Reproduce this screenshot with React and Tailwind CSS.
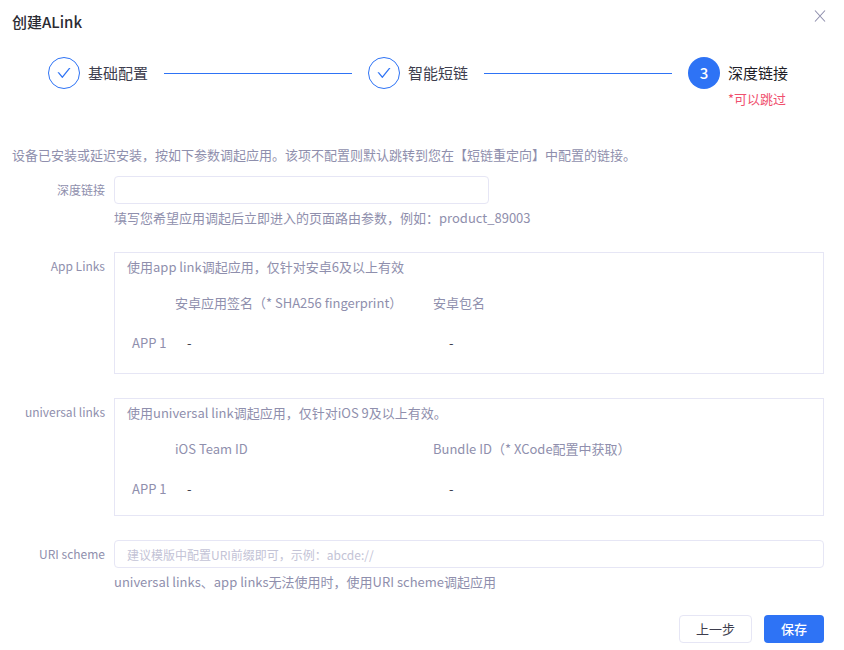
import React, { useState } from 'react';

const steps = [
    { title: '基础配置', status: 'done' },
    { title: '智能短链', status: 'done' },
    { title: '深度链接', status: 'active', subTitle: '*可以跳过' },
];

const StepIcon = ({ status, number }) => {
    if (status === 'done') {
        return (
            <span className="flex h-8 w-8 shrink-0 items-center justify-center rounded-full border border-[#2e73f5] text-[#2e73f5]">
                <svg width="16" height="16" viewBox="0 0 1024 1024" fill="currentColor" aria-hidden="true">
                    <path d="M912 190h-69.9c-9.8 0-19.1 4.5-25.1 12.2L404.7 724.5 207 474a32 32 0 0 0-25.1-12.2H112c-6.7 0-10.4 7.7-6.3 12.9l273.9 347c12.8 16.2 37.4 16.2 50.3 0l488.4-618.9c4.1-5.1.4-12.8-6.3-12.8z" />
                </svg>
            </span>
        );
    }
    return (
        <span className="flex h-8 w-8 shrink-0 items-center justify-center rounded-full bg-[#2e73f5] text-[15px] font-medium text-white">
            {number}
        </span>
    );
};

const Steps = () => (
    <ol className="flex items-start px-9">
        {steps.map((step, index) => {
            const last = index === steps.length - 1;
            return (
                <li key={step.title} className={last ? 'flex' : 'flex flex-1'}>
                    <StepIcon status={step.status} number={index + 1} />
                    <div className="ml-2 shrink-0">
                        <div className={last ? 'text-[15px] leading-8 text-[#1d1d26]' : 'text-[15px] leading-8 text-[#3d3d4d]'}>
                            {step.title}
                        </div>
                        {step.subTitle && <div className="text-[13px] leading-5 text-[#f0506e]">{step.subTitle}</div>}
                    </div>
                    {!last && <span className="mx-4 mt-4 h-px flex-1 bg-[#2e73f5]" />}
                </li>
            );
        })}
    </ol>
);

const labelClass = 'w-[102px] shrink-0 pr-[9px] text-right text-xs leading-7';

const FormRow = ({ label, htmlFor, children }) => (
    <div className="flex">
        {htmlFor ? (
            <label htmlFor={htmlFor} className={labelClass}>{label}</label>
        ) : (
            <div className={labelClass}>{label}</div>
        )}
        <div className="min-w-0 flex-1">{children}</div>
    </div>
);

const AppTable = ({ intro, columns, className }) => (
    <div className={`border border-[#e6e6f5] px-3 pt-1 ${className}`}>
        <p className="mb-1.5 leading-5">{intro}</p>
        <table className="w-full table-fixed text-left">
            <thead>
                <tr className="h-10">
                    <td className="w-12" />
                    <th className="w-[258px] font-normal">{columns[0]}</th>
                    <th className="font-normal">{columns[1]}</th>
                </tr>
            </thead>
            <tbody>
                <tr className="h-10">
                    <th className="whitespace-nowrap pl-[5px] font-normal">APP 1</th>
                    <td className="pl-3 text-[#3d3d4d]">-</td>
                    <td className="pl-4 text-[#3d3d4d]">-</td>
                </tr>
            </tbody>
        </table>
    </div>
);

const inputClass = 'block h-7 rounded border border-[#e6e6f5] bg-white px-3 text-xs text-[#3d3d4d] placeholder:text-[#c3c3d6] focus:border-[#2e73f5] focus:outline-none';

const App = () => {
    const [formData, setFormData] = useState({ deepLink: '', uriScheme: '' });
    const { deepLink, uriScheme } = formData;

    const onChange = (e) => {
        setFormData({ ...formData, [e.target.name]: e.target.value });
    };

    const onSubmit = (e) => {
        e.preventDefault();
    };

    return (
        <div className="bg-white pb-1 pl-3 pr-5 font-['Noto_Sans_CJK_SC',sans-serif] text-[13px] text-[#8f8fad]">
            {/* Header */}
            <header className="mb-3.5 flex items-start justify-between">
                <h1 className="text-[15px] font-medium leading-[43px] text-[#2b2b33]">创建ALink</h1>
                <button type="button" aria-label="关闭" className="-mr-3 flex h-8 w-8 items-center justify-center">
                    <svg width="12" height="12" viewBox="0 0 12 12" fill="none" stroke="currentColor" strokeWidth="1.1" aria-hidden="true">
                        <path d="M1 0.5 11 11.5M11 0.5 1 11.5" />
                    </svg>
                </button>
            </header>

            <Steps />

            <form onSubmit={onSubmit} className="mt-9">
                <p className="mb-[11px] leading-5">
                    设备已安装或延迟安装，按如下参数调起应用。该项不配置则默认跳转到您在【短链重定向】中配置的链接。
                </p>

                <div>
                    <FormRow label="深度链接" htmlFor="deepLink">
                        <input
                            type="text"
                            id="deepLink"
                            name="deepLink"
                            value={deepLink}
                            onChange={onChange}
                            className={`w-[375px] max-w-full ${inputClass}`}
                        />
                        <p className="mb-5 leading-7">填写您希望应用调起后立即进入的页面路由参数，例如：product_89003</p>
                    </FormRow>

                    <FormRow label="App Links">
                        <AppTable
                            intro="使用app link调起应用，仅针对安卓6及以上有效"
                            columns={['安卓应用签名（* SHA256 fingerprint）', '安卓包名']}
                            className="mb-6 pb-2.5"
                        />
                    </FormRow>

                    <FormRow label="universal links">
                        <AppTable
                            intro="使用universal link调起应用，仅针对iOS 9及以上有效。"
                            columns={['iOS Team ID', 'Bundle ID（* XCode配置中获取）']}
                            className="mb-6 pb-1.5"
                        />
                    </FormRow>

                    <FormRow label="URI scheme" htmlFor="uriScheme">
                        <input
                            type="text"
                            id="uriScheme"
                            name="uriScheme"
                            value={uriScheme}
                            onChange={onChange}
                            placeholder="建议模版中配置URI前缀即可，示例：abcde://"
                            className={`w-full ${inputClass}`}
                        />
                        <p className="leading-7">universal links、app links无法使用时，使用URI scheme调起应用</p>
                    </FormRow>
                </div>

                {/* Footer buttons */}
                <div className="mt-[19px] flex justify-end gap-3">
                    <button type="button" className="h-7 rounded border border-[#e6e6f5] bg-white px-4 text-[#3d3d4d]">
                        上一步
                    </button>
                    <button type="submit" className="h-7 rounded bg-[#2e73f5] px-[17px] font-medium text-white">
                        保存
                    </button>
                </div>
            </form>
        </div>
    );
};

export default App;
